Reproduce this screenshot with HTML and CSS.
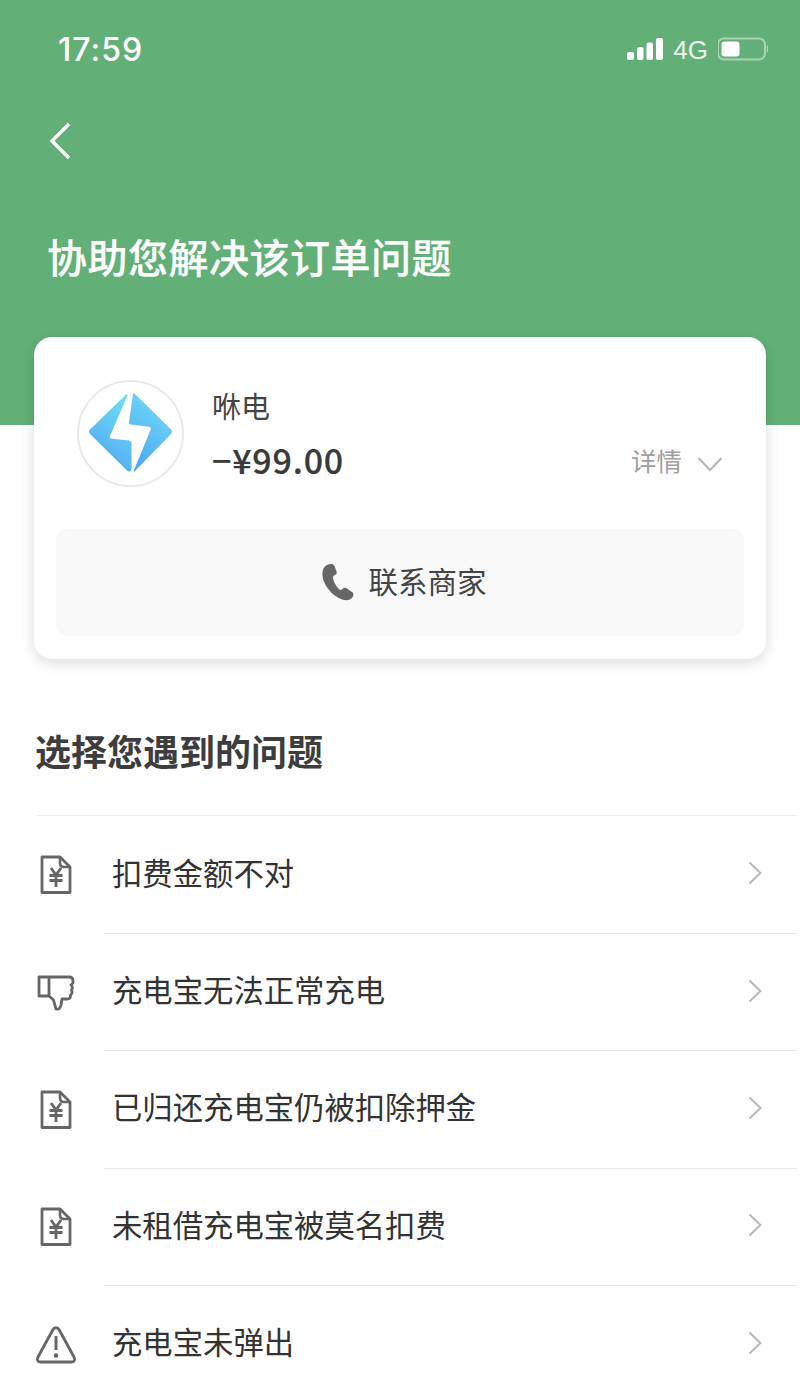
FILE: index.html
```html
<!DOCTYPE html>
<html lang="zh">
<head>
<meta charset="utf-8">
<title>协助您解决该订单问题</title>
<link rel="stylesheet" href="styles.css">
</head>
<body>
<svg class="defs" width="0" height="0" aria-hidden="true">
  <symbol id="bill" viewBox="0 0 32 40">
    <path d="M2 2H20L30 12V37.500H2Z" fill="none" stroke="#666" stroke-width="2.800" stroke-linejoin="round"/>
    <path d="M20 2V8Q20 12 24 12H30" fill="none" stroke="#666" stroke-width="2.600"/>
    <path d="M11 13L16 20L21 13M9.500 20.500H22.500M9.500 25.500H22.500M16 20V32" fill="none" stroke="#666" stroke-width="2.800"/>
  </symbol>
  <symbol id="chev" viewBox="0 0 14 24">
    <path d="M1.500 1.500L12.500 12L1.500 22.500" fill="none" stroke="#b8b8b8" stroke-width="2"/>
  </symbol>
</svg>
<header class="hero">
  <div class="status">
    <span class="time">17:59</span>
    <div class="status-right">
      <svg class="signal" width="36" height="24" viewBox="0 0 36 24"><rect x="0" y="15" width="7" height="8" rx="2" fill="#fff"/><rect x="10" y="10" width="6.500" height="13" rx="2" fill="#fff"/><rect x="19.500" y="5.500" width="6.500" height="17.500" rx="2" fill="#fff"/><rect x="29" y="1" width="7" height="22" rx="2" fill="#fff"/></svg>
      <span class="net">4G</span>
      <svg class="battery" width="50" height="24" viewBox="0 0 50 24"><rect x="0" y="1.500" width="47" height="21" rx="6" fill="none" stroke="#a9d3b2" stroke-width="2"/><rect x="3.500" y="4.500" width="18" height="15" rx="3" fill="#fff"/><path d="M49 9Q50.500 12 49 15" fill="none" stroke="#a9d3b2" stroke-width="1.500"/></svg>
    </div>
  </div>
  <svg class="back" width="24" height="38" viewBox="0 0 24 38"><path d="M21 2L4 19L21 36" fill="none" stroke="#fff" stroke-width="3.400"/></svg>
  <h1 class="title">协助您解决该订单问题</h1>
</header>

<main class="content">
  <section class="card">
    <div class="merchant">
      <div class="logo">
        <svg width="86" height="86" viewBox="0 0 86 86">
          <defs>
            <linearGradient id="g1" x1="0.700" y1="0" x2="0.300" y2="1"><stop offset="0" stop-color="#6fdcf7"/><stop offset="1" stop-color="#4fa6f2"/></linearGradient>
          </defs>
          <path d="M38 4.500Q40 3.500 39.500 5.500L22 46Q21 48.500 24 48.800L41 50.500Q43.500 51 43.500 53V78Q43.500 83 39.500 81L2 44Q0 41.700 2 39.500Z" fill="url(#g1)"/>
          <path d="M45 4.500Q45 2.500 47 4L83 39.500Q85 41.700 83 44L47 81Q45 82.500 46 80L62.500 40Q63.500 37 61 36.700L43 34.500Q40.800 34 41 32Z" fill="url(#g1)"/>
        </svg>
      </div>
      <div class="merchant-info">
        <div class="name">咻电</div>
        <div class="amount">−¥99.00</div>
      </div>
      <div class="detail">
        <span class="detail-label">详情</span>
        <svg width="26" height="16" viewBox="0 0 26 16"><path d="M1.500 2L13 14L24.500 2" fill="none" stroke="#b5b5b5" stroke-width="2"/></svg>
      </div>
    </div>
    <div class="contact">
      <svg width="32" height="38" viewBox="0 0 32 38"><path d="M6 1.500C2 3 0 7 0.500 13C1.500 22 10 33 20 36.500C25 38 29 37 31 33.500C32 31.500 31.500 30 30 29L25 25.500C23.500 24.500 22 24.500 20.500 26C19 27.500 17.500 27 16 25C13.500 22 11.500 18.500 11 15.500C10.500 13.500 11.500 12.500 13 12C14.500 11.500 15 10 14.500 8.500L12.500 3C11.500 0.500 8.500 0.500 6 1.500Z" fill="#666"/></svg>
      <span class="contact-label">联系商家</span>
    </div>
  </section>

  <h2 class="section-title">选择您遇到的问题</h2>

  <ul class="list">
    <li class="row row-first">
      <svg class="icon" width="32" height="40"><use href="#bill"/></svg>
      <div class="row-body"><span class="row-label">扣费金额不对</span><svg class="chev" width="14" height="24"><use href="#chev"/></svg></div>
    </li>
    <li class="row">
      <svg class="icon" width="38" height="36" viewBox="0 0 38 36"><path d="M2 2H32Q36 2 36 6V7Q36 9 34 10Q36.500 12 34.500 15Q36 18 33.500 20Q34 24 30 24H25L24 30Q23 35 19 34L16.500 25L12 21H2ZM12 2V21" fill="none" stroke="#666" stroke-width="2.800" stroke-linejoin="round"/></svg>
      <div class="row-body"><span class="row-label">充电宝无法正常充电</span><svg class="chev" width="14" height="24"><use href="#chev"/></svg></div>
    </li>
    <li class="row">
      <svg class="icon" width="32" height="40"><use href="#bill"/></svg>
      <div class="row-body"><span class="row-label">已归还充电宝仍被扣除押金</span><svg class="chev" width="14" height="24"><use href="#chev"/></svg></div>
    </li>
    <li class="row">
      <svg class="icon" width="32" height="40"><use href="#bill"/></svg>
      <div class="row-body"><span class="row-label">未租借充电宝被莫名扣费</span><svg class="chev" width="14" height="24"><use href="#chev"/></svg></div>
    </li>
    <li class="row">
      <svg class="icon" width="40" height="38" viewBox="0 0 40 38"><path d="M17 3.500Q20 0 23 3.500L38 31Q40 36 35 36H5Q0 36 2 31Z" fill="none" stroke="#666" stroke-width="2.800" stroke-linejoin="round"/><path d="M20 10V24" stroke="#666" stroke-width="3"/><circle cx="20" cy="29.500" r="2.200" fill="#666"/></svg>
      <div class="row-body"><span class="row-label">充电宝未弹出</span><svg class="chev" width="14" height="24"><use href="#chev"/></svg></div>
    </li>
  </ul>
</main>
</body>
</html>
```
FILE: styles.css
```css
* { box-sizing: border-box; }
html, body { margin: 0; padding: 0; }
body {
  width: 800px;
  height: 1385px;
  overflow: hidden;
  background: #fff;
  font-family: "Noto Sans CJK SC", "Noto Sans", sans-serif;
  color: #333;
}
.defs { display: block; height: 0; }
.hero {
  height: 425px;
  background: #62b077;
  color: #fff;
  padding: 30px 32px 0 48px;
}
.status {
  display: flex;
  justify-content: space-between;
  align-items: center;
  height: 38px;
  padding-left: 10px;
}
.time {
  font-family: "Inter", "Liberation Sans", sans-serif;
  font-size: 32px;
  font-weight: 500;
  letter-spacing: 1px;
  line-height: 38px;
  margin-top: 2px;
}
.status-right { display: flex; align-items: center; }
.net {
  font-family: "Liberation Sans", sans-serif;
  font-size: 26px;
  margin: 2px 10px 0 10px;
  line-height: 24px;
  color: #eef7f0;
}
.back { display: block; margin-top: 54px; }
.title {
  margin: 66px 0 0 -1px;
  font-size: 40px;
  line-height: 60px;
  font-weight: 500;
  letter-spacing: 0.5px;
  -webkit-text-stroke: 0.25px #fff;
}
.content { padding: 0 3px 0 34px; }
.card {
  width: 732px;
  height: 322px;
  margin-top: -88px;
  position: relative;
  background: #fff;
  border-radius: 18px;
  box-shadow: 0 4px 14px rgba(0, 0, 0, 0.14);
  padding: 42px 22px 0;
}
.merchant { display: flex; align-items: center; height: 108px; padding-left: 21px; }
.logo {
  width: 107px;
  height: 107px;
  border: 2px solid #e8e8e8;
  border-radius: 50%;
  display: flex;
  align-items: center;
  justify-content: center;
}
.merchant-info { margin-left: 28px; align-self: flex-start; padding-top: 5.500px; }
.name { font-size: 29px; line-height: 40px; color: #444; }
.amount {
  font-size: 34px;
  line-height: 48px;
  font-weight: 500;
  margin-top: 11px;
  letter-spacing: 0.8px;
  color: #3a3a3a;
  -webkit-text-stroke: 0.2px #3a3a3a;
}
.detail {
  margin-left: auto;
  margin-top: 58px;
  padding-right: 21px;
  display: flex;
  align-items: center;
  gap: 15px;
  font-size: 25.500px;
  color: #a0a0a0;
}
.detail-label { margin: 0 0 5px -1px; }
.detail svg { margin-top: 3px; }
.contact {
  margin-top: 42px;
  height: 107px;
  background: #f9f9f9;
  border-radius: 10px;
  display: flex;
  align-items: center;
  justify-content: center;
  gap: 14px;
  padding-left: 9px;
  font-size: 29.500px;
  color: #444;
}
.contact-label { margin-bottom: 5px; }
.contact svg { margin-bottom: 2px; }
.section-title {
  margin: 65px 0 0;
  padding-left: 1px;
  font-size: 36px;
  line-height: 52px;
  font-weight: 700;
  color: #3d3d3d;
  height: 91px;
}
.list { list-style: none; margin: 0; padding: 0; }
.row { display: flex; align-items: stretch; height: 117.300px; position: relative; padding-left: 3px; }
.row-first { border-top: 1px solid #ececec; height: 119px; margin-left: 3px; padding-left: 0; }
.icon { align-self: center; width: 40px; flex: none; margin-left: -1px; margin-right: 1px; }
.row-body {
  flex: 1;
  margin-left: 27px;
  display: flex;
  align-items: center;
  justify-content: space-between;
  padding: 0 35px 0 8px;
  font-size: 30.350px;
  color: #333;
  border-bottom: 1px solid #e8e8e8;
}
.row-label { margin-bottom: 6px; }
.chev { flex: none; margin-bottom: 3px; }
```
